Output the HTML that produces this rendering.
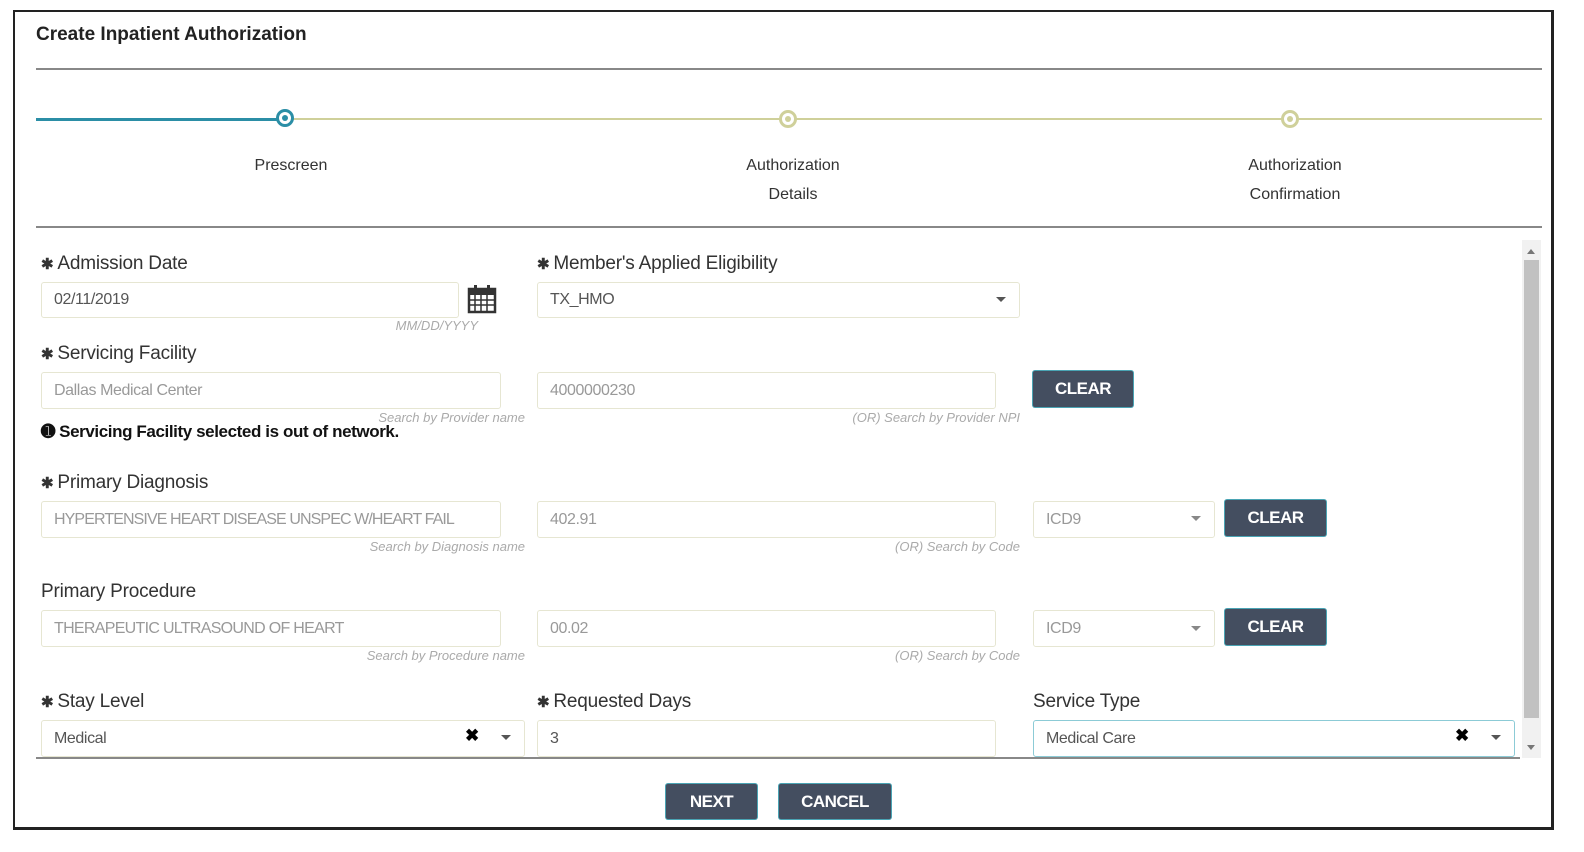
<!DOCTYPE html>
<html style="overflow:hidden"><head><style>
html,body{margin:0;overflow:hidden}
body{width:1584px;height:852px;background:#fff;position:relative;font-family:"Liberation Sans",sans-serif}
.a{position:absolute}
.frame{left:13px;top:10px;width:1536px;height:815px;border:2px solid #222;border-right-width:3px;border-bottom-width:3px}
.lab{position:absolute;font-size:19px;color:#333;white-space:nowrap;letter-spacing:-0.2px}
.lab b{font-size:15px;margin-right:4px}
.in{position:absolute;border:1.5px solid #e6e6d2;border-radius:3px;box-sizing:border-box;font-size:16px;color:#999;padding-left:12px;display:flex;align-items:center;background:#fff;white-space:nowrap;overflow:hidden;letter-spacing:-0.4px}
.in.dark{color:#555}
.hint{position:absolute;font-size:13px;color:#aaa;font-style:italic;white-space:nowrap;text-align:right}
.btn{position:absolute;background:#444e60;color:#fff;font-weight:bold;font-size:17px;display:flex;align-items:center;justify-content:center;border-radius:2px;box-shadow:0 0 0 1px #4aa4b4;letter-spacing:-0.5px}
.car{position:absolute;width:0;height:0;border-left:5px solid transparent;border-right:5px solid transparent;border-top:5px solid #555}
.step{position:absolute;font-size:16px;color:#333;text-align:center;width:200px;line-height:29px}
.dot{position:absolute;width:18px;height:18px;border-radius:50%;background:#fff;box-sizing:border-box}
</style></head><body>
<div class="a frame"></div>
<div class="a" style="left:36px;top:24px;font-size:19px;color:#222;font-weight:bold">Create Inpatient Authorization</div>
<div class="a" style="left:36px;top:68px;width:1506px;height:2px;background:#888"></div>
<div class="a" style="left:36px;top:118px;width:251px;height:3px;background:#2b8ea6"></div>
<div class="a" style="left:287px;top:118px;width:1255px;height:2px;background:#cfd09a"></div>
<div class="dot" style="left:276px;top:109px;border:3px solid #2b8ea6"><div class="a" style="left:3px;top:3px;width:6px;height:6px;border-radius:50%;background:#2b8ea6"></div></div>
<div class="dot" style="left:779px;top:110px;border:3px solid #cfd09a"><div class="a" style="left:3px;top:3px;width:6px;height:6px;border-radius:50%;background:#cfd09a"></div></div>
<div class="dot" style="left:1281px;top:110px;border:3px solid #cfd09a"><div class="a" style="left:3px;top:3px;width:6px;height:6px;border-radius:50%;background:#cfd09a"></div></div>
<div class="step" style="left:191px;top:151px">Prescreen</div>
<div class="step" style="left:693px;top:151px">Authorization<br>Details</div>
<div class="step" style="left:1195px;top:151px">Authorization<br>Confirmation</div>
<div class="a" style="left:36px;top:226px;width:1506px;height:2px;background:#888"></div>

<div class="lab" style="left:41px;top:253px"><b>✱</b>Admission Date</div>
<div class="in dark" style="left:41px;top:282px;width:418px;height:36px">02/11/2019</div>
<svg class="a" style="left:467px;top:284px" width="30" height="30" viewBox="0 0 30 30"><rect x="2" y="5" width="26" height="23" fill="none" stroke="#333" stroke-width="2.5"/><rect x="2" y="5" width="26" height="6" fill="#333"/><rect x="7" y="1" width="3" height="7" fill="#333"/><rect x="20" y="1" width="3" height="7" fill="#333"/><path d="M8 11v17M14 11v17M20 11v17M2 16h26M2 21h26" stroke="#333" stroke-width="1.5"/></svg>
<div class="hint" style="left:330px;top:318px;width:148px">MM/DD/YYYY</div>
<div class="lab" style="left:537px;top:253px"><b>✱</b>Member's Applied Eligibility</div>
<div class="in dark" style="left:537px;top:282px;width:483px;height:36px">TX_HMO</div>
<div class="car" style="left:996px;top:297px"></div>

<div class="lab" style="left:41px;top:343px"><b>✱</b>Servicing Facility</div>
<div class="in" style="left:41px;top:372px;width:460px;height:37px">Dallas Medical Center</div>
<div class="hint" style="left:300px;top:410px;width:225px">Search by Provider name</div>
<div class="in" style="left:537px;top:372px;width:459px;height:37px">4000000230</div>
<div class="hint" style="left:780px;top:410px;width:240px">(OR) Search by Provider NPI</div>
<div class="btn" style="left:1033px;top:371px;width:100px;height:36px">CLEAR</div>
<div class="a" style="left:41px;top:422px;font-size:17px;font-weight:bold;color:#111;letter-spacing:-0.4px">&#x278A; Servicing Facility selected is out of network.</div>

<div class="lab" style="left:41px;top:472px"><b>✱</b>Primary Diagnosis</div>
<div class="in" style="left:41px;top:501px;width:460px;height:37px;letter-spacing:-0.9px">HYPERTENSIVE HEART DISEASE UNSPEC W/HEART FAIL</div>
<div class="hint" style="left:300px;top:539px;width:225px">Search by Diagnosis name</div>
<div class="in" style="left:537px;top:501px;width:459px;height:37px">402.91</div>
<div class="hint" style="left:780px;top:539px;width:240px">(OR) Search by Code</div>
<div class="in" style="left:1033px;top:501px;width:182px;height:37px">ICD9</div>
<div class="car" style="left:1191px;top:516px;border-top-color:#888"></div>
<div class="btn" style="left:1225px;top:500px;width:101px;height:36px">CLEAR</div>

<div class="lab" style="left:41px;top:581px">Primary Procedure</div>
<div class="in" style="left:41px;top:610px;width:460px;height:37px;letter-spacing:-0.7px">THERAPEUTIC ULTRASOUND OF HEART</div>
<div class="hint" style="left:300px;top:648px;width:225px">Search by Procedure name</div>
<div class="in" style="left:537px;top:610px;width:459px;height:37px">00.02</div>
<div class="hint" style="left:780px;top:648px;width:240px">(OR) Search by Code</div>
<div class="in" style="left:1033px;top:610px;width:182px;height:37px">ICD9</div>
<div class="car" style="left:1191px;top:626px;border-top-color:#888"></div>
<div class="btn" style="left:1225px;top:609px;width:101px;height:36px">CLEAR</div>

<div class="lab" style="left:41px;top:691px"><b>✱</b>Stay Level</div>
<div class="in dark" style="left:41px;top:720px;width:484px;height:37px">Medical</div>
<div class="a" style="left:465px;top:726px;font-size:17px;font-weight:bold">✖</div>
<div class="car" style="left:501px;top:735px"></div>
<div class="lab" style="left:537px;top:691px"><b>✱</b>Requested Days</div>
<div class="in dark" style="left:537px;top:720px;width:459px;height:37px">3</div>
<div class="lab" style="left:1033px;top:691px">Service Type</div>
<div class="in dark" style="left:1033px;top:720px;width:482px;height:37px;border-color:#8ccbd6">Medical Care</div>
<div class="a" style="left:1455px;top:726px;font-size:17px;font-weight:bold">✖</div>
<div class="car" style="left:1491px;top:735px"></div>

<div class="a" style="left:1522px;top:240px;width:19px;height:518px;background:#f1f1f1"></div>
<div class="a" style="left:1524px;top:260px;width:15px;height:458px;background:#c1c1c1"></div>
<div class="car" style="left:1527px;top:249px;border-top:none;border-bottom:5px solid #777;border-left-width:4px;border-right-width:4px"></div>
<div class="car" style="left:1527px;top:745px;border-top-color:#777;border-left-width:4px;border-right-width:4px"></div>
<div class="a" style="left:36px;top:757px;width:1484px;height:2px;background:#888"></div>

<div class="btn" style="left:666px;top:784px;width:91px;height:35px">NEXT</div>
<div class="btn" style="left:779px;top:784px;width:112px;height:35px">CANCEL</div>
</body></html>
